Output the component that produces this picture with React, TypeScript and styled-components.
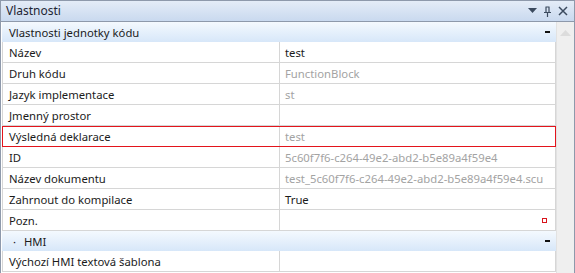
import React from "react";
import styled, { createGlobalStyle } from "styled-components";

const GlobalStyle = createGlobalStyle`
  html, body {
    margin: 0;
    padding: 0;
    background: #ffffff;
  }
  body {
    font-family: "Noto Sans", "Liberation Sans", sans-serif;
    font-size: 11.3px;
  }
`;

type Prop = {
  label: string;
  value?: string;
  muted?: boolean;
  error?: boolean;
  marker?: boolean;
};

const units: Prop[] = [
  { label: "Název", value: "test" },
  { label: "Druh kódu", value: "FunctionBlock", muted: true },
  { label: "Jazyk implementace", value: "st", muted: true },
  { label: "Jmenný prostor", value: "" },
  { label: "Výsledná deklarace", value: "test", muted: true, error: true },
  { label: "ID", value: "5c60f7f6-c264-49e2-abd2-b5e89a4f59e4", muted: true },
  { label: "Název dokumentu", value: "test_5c60f7f6-c264-49e2-abd2-b5e89a4f59e4.scu", muted: true },
  { label: "Zahrnout do kompilace", value: "True" },
  { label: "Pozn.", value: "", marker: true },
];

const hmi: Prop[] = [{ label: "Výchozí HMI textová šablona", value: "" }];

function App() {
  return (
    <>
      <GlobalStyle />
      <Window>
        <TitleBar>
          <Title>Vlastnosti</Title>
          <TitleTools>
            <svg width="9" height="6" viewBox="0 0 9 6">
              <path d="M0 0h9L4.5 5z" fill="#3b4a5e" />
            </svg>
            <svg width="9" height="11" viewBox="0 0 9 11">
              <path d="M2.5 1h4M3 1v5M6 1v5M1 6.5h7M4.5 7v4" stroke="#3b4a5e" strokeWidth="1.2" fill="none" />
            </svg>
            <svg width="10" height="10" viewBox="0 0 10 10">
              <path d="M1 1l8 8M9 1L1 9" stroke="#3b4a5e" strokeWidth="1.5" />
            </svg>
          </TitleTools>
        </TitleBar>
        <Body>
          <Grid>
            <Category>
              <span>Vlastnosti jednotky kódu</span>
              <Collapse />
            </Category>
            {units.map((p) => (
              <Row key={p.label} $error={p.error}>
                <Label>{p.label}</Label>
                <Value $muted={p.muted}>
                  <span>{p.value}</span>
                  {p.marker && <Marker />}
                </Value>
              </Row>
            ))}
            <Category>
              <span>
                <Dot>·</Dot>HMI
              </span>
              <Collapse />
            </Category>
            {hmi.map((p) => (
              <Row key={p.label}>
                <Label>{p.label}</Label>
                <Value>
                  <span>{p.value}</span>
                </Value>
              </Row>
            ))}
          </Grid>
          <Scrollbar>
            <svg width="11" height="6" viewBox="0 0 11 6">
              <path d="M0 6L5.5 0 11 6z" fill="#dcdcdc" />
            </svg>
          </Scrollbar>
        </Body>
      </Window>
    </>
  );
}

const Window = styled.div`
  width: 575px;
  height: 273px;
  box-sizing: border-box;
  border: 1px solid #8e99ab;
  border-bottom: none;
  display: flex;
  flex-direction: column;
  overflow: hidden;
  color: #1b1b1b;
`;
const TitleBar = styled.div`
  height: 20px;
  flex: none;
  display: flex;
  align-items: center;
  justify-content: space-between;
  padding: 0 5px 0 5px;
  background: linear-gradient(#e4ecf7, #c9d9ef);
  border-bottom: 1px solid #8e99ab;
`;
const Title = styled.div`
  color: #1e2633;
  font-size: 12px;
  line-height: 20px;
`;
const TitleTools = styled.div`
  display: flex;
  align-items: center;
  gap: 6px;
  padding-right: 1px;
  svg {
    display: block;
  }
`;
const Body = styled.div`
  flex: 1;
  display: flex;
  min-height: 0;
`;
const Grid = styled.div`
  flex: 1;
  min-width: 0;
  overflow: hidden;
  display: flex;
  flex-direction: column;
  padding-left: 1px;
`;
const Category = styled.div`
  height: 20px;
  flex: none;
  display: flex;
  align-items: center;
  justify-content: space-between;
  padding: 0 6px 0 7px;
  background: linear-gradient(#f4f9fe, #d7e7f9);
  color: #1b1b1b;
`;
const Dot = styled.span`
  display: inline-block;
  width: 15px;
  padding-left: 4px;
  box-sizing: border-box;
`;
const Collapse = styled.span`
  width: 5px;
  height: 1.5px;
  background: #111;
`;
const Row = styled.div<{ $error?: boolean }>`
  height: 20px;
  flex: none;
  display: grid;
  grid-template-columns: 277px 1fr;
  border-bottom: 1px solid #d6d6d6;
  border-left: 1px solid #d6d6d6;
  border-right: 1px solid #d6d6d6;
  outline: ${(p) => (p.$error ? "1px solid #e3141c" : "none")};
  outline-offset: ${(p) => (p.$error ? "-1px" : "0")};
`;
const Label = styled.div`
  display: flex;
  align-items: center;
  padding-left: 6px;
  border-right: 1px solid #d6d6d6;
  white-space: nowrap;
`;
const Value = styled.div<{ $muted?: boolean }>`
  display: flex;
  align-items: center;
  justify-content: space-between;
  padding: 0 5px 0 5px;
  color: ${(p) => (p.$muted ? "#a3a3a3" : "#1b1b1b")};
  white-space: nowrap;
  overflow: hidden;
`;
const Marker = styled.span`
  width: 3px;
  height: 3px;
  border: 1.5px solid #d9141c;
  margin-right: 3px;
`;
const Scrollbar = styled.div`
  width: 17px;
  flex: none;
  background: #efefef;
  border-left: 1px solid #e2e2e2;
  display: flex;
  justify-content: center;
  padding-top: 8px;
  align-items: flex-start;
`;

export default App;
